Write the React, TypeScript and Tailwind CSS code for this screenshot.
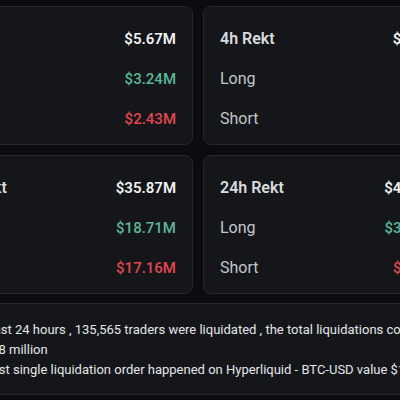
import React from "react";

type Card = { title: string; total: string; long: string; short: string };

const cards: Card[] = [
  { title: "1h Rekt", total: "$5.67M", long: "$3.24M", short: "$2.43M" },
  { title: "4h Rekt", total: "$17.93M", long: "$9.81M", short: "$8.12M" },
  { title: "12h Rekt", total: "$35.87M", long: "$18.71M", short: "$17.16M" },
  { title: "24h Rekt", total: "$436.58M", long: "$342.34M", short: "$94.24M" },
];

function RektCard({ c }: { c: Card }) {
  return (
    <div className="flex flex-col gap-4 rounded-lg border border-[#24272d] bg-[#14161a] px-4 pt-[20px] pb-[13px]">
      <div className="flex items-center justify-between leading-6">
        <span className="text-[16px] font-semibold text-[#d9dbdf]">{c.title}</span>
        <span className="text-[15px] font-semibold text-[#f1f2f4]">{c.total}</span>
      </div>
      <div className="flex items-center justify-between leading-6">
        <span className="text-[16px] text-[#c3c6cb]">Long</span>
        <span className="text-[15px] font-medium text-[#5bb597]">{c.long}</span>
      </div>
      <div className="flex items-center justify-between leading-6">
        <span className="text-[16px] text-[#c3c6cb]">Short</span>
        <span className="text-[15px] font-medium text-[#e0464e]">{c.short}</span>
      </div>
    </div>
  );
}

export default function App() {
  return (
    <div
      className="h-[400px] w-[400px] overflow-hidden bg-[#0b0c0f]"
      style={{ fontFamily: "Roboto, 'Noto Sans', sans-serif" }}
    >
      <div className="ml-[-74px] flex w-[544px] flex-col gap-[9px] pt-[6px]">
        <div className="grid grid-cols-2 gap-x-[10px] gap-y-[10px]">
          {cards.map((c) => (
            <RektCard key={c.title} c={c} />
          ))}
        </div>
        <div className="rounded-lg border border-[#24272d] bg-[#14161a] px-6 pt-4 pb-[14px] text-[13px] leading-5 text-[#e4e5e8]">
          <div className="whitespace-nowrap">
            In the past 24 hours , 135,565 traders were liquidated , the total liquidations comes in
          </div>
          <div className="ml-[-7px] whitespace-nowrap">at $436.58 million</div>
          <div className="ml-[-6px] whitespace-nowrap">
            The largest single liquidation order happened on Hyperliquid - BTC-USD value $10.35M
          </div>
        </div>
      </div>
    </div>
  );
}
